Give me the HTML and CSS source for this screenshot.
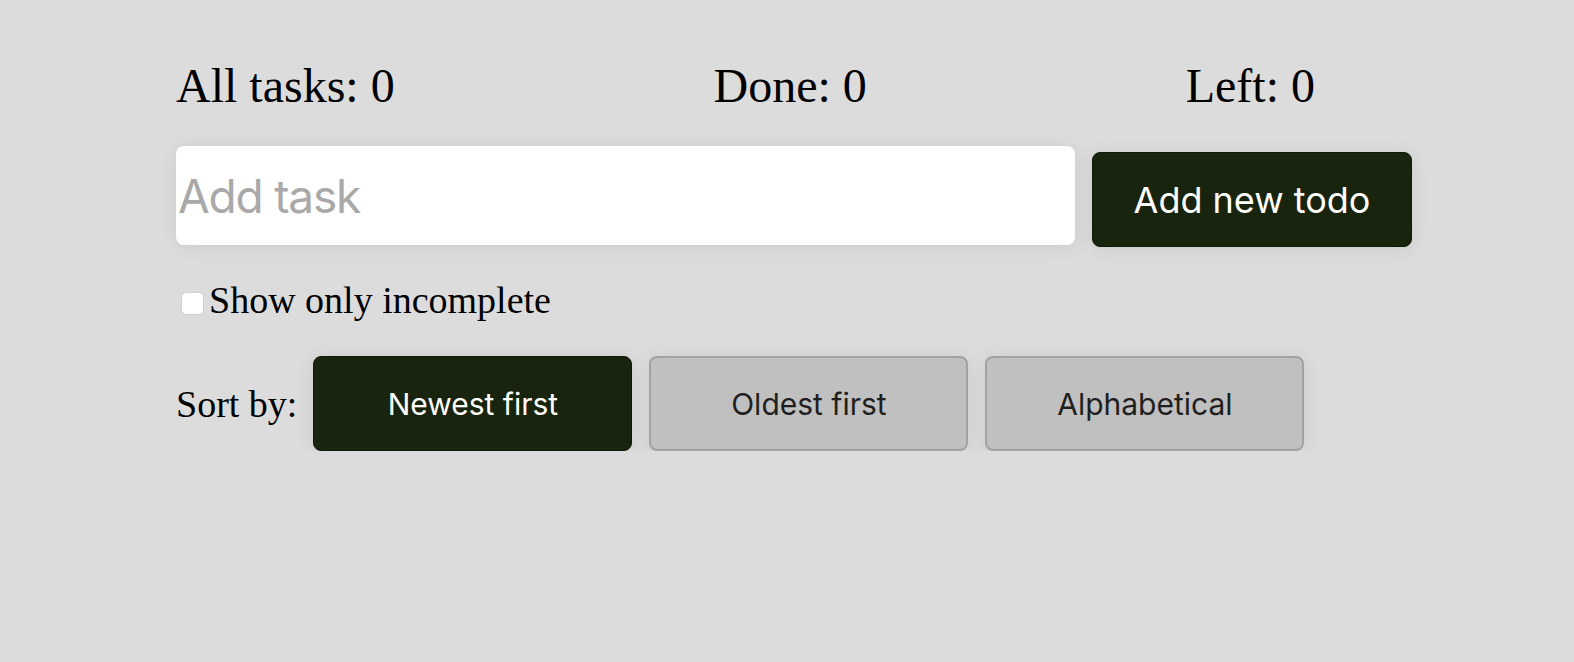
FILE: index.html
```html
<!DOCTYPE html>
<html lang="en">
<head>
<meta charset="utf-8">
<title>Todo</title>
<link rel="stylesheet" href="styles.css">
</head>
<body>
<div class="app">
  <div class="stats">
    <span>All tasks: 0</span>
    <span>Done: 0</span>
    <span>Left: 0</span>
  </div>
  <form class="add-form">
    <input class="task-input" type="text" placeholder="Add task">
    <button class="btn btn-dark btn-add" type="button">Add new todo</button>
  </form>
  <label class="filter">
    <input class="check" type="checkbox">
    <span>Show only incomplete</span>
  </label>
  <div class="sort">
    <span class="sort-label">Sort by:</span>
    <button class="btn btn-dark btn-sort" type="button">Newest first</button>
    <button class="btn btn-light btn-sort" type="button">Oldest first</button>
    <button class="btn btn-light btn-sort" type="button">Alphabetical</button>
  </div>
</div>
</body>
</html>
```

FILE: styles.css
```css
html, body {
  margin: 0;
  padding: 0;
  background: #dcdcdc;
}
body {
  font-family: "Liberation Serif", "Times New Roman", serif;
  color: #000;
}
.app {
  padding: 58px 0 0 176px;
}
.stats {
  display: flex;
  justify-content: space-between;
  width: 1139px;
  font-size: 48px;
  line-height: 55px;
}
.add-form {
  display: flex;
  align-items: flex-start;
  gap: 17px;
  margin: 33px 0 0 0;
}
.task-input {
  box-sizing: border-box;
  width: 899px;
  height: 99px;
  border: none;
  border-radius: 8px;
  background: #fff;
  padding: 0 0 0 2px;
  font-family: Inter, "Liberation Sans", sans-serif;
  font-size: 46px;
  letter-spacing: -1.2px;
  color: #222;
  outline: none;
  box-shadow: 0 2px 20px rgba(0, 0, 0, 0.07);
}
.task-input::placeholder {
  color: #a9a9a9;
}
.btn {
  box-sizing: border-box;
  width: 319px;
  height: 95px;
  border-radius: 8px;
  font-family: Inter, "Liberation Sans", sans-serif;
  cursor: pointer;
  box-shadow: 0 2px 20px rgba(0, 0, 0, 0.08);
}
.btn-dark {
  background: #18240d;
  border: 1px solid #111a09;
  color: #fff;
}
.btn-light {
  background: #c0c0c0;
  border: 2px solid #a2a2a2;
  color: #1f1f1f;
}
.btn-add {
  width: 320px;
  margin-top: 6px;
  font-size: 36px;
}
.btn-sort {
  font-size: 30px;
}
.filter {
  display: flex;
  align-items: center;
  margin-top: 31px;
  font-size: 38px;
  line-height: 44px;
}
.check {
  appearance: none;
  -webkit-appearance: none;
  box-sizing: border-box;
  width: 23px;
  height: 23px;
  margin: 6px 5px 0 5px;
  background: #fff;
  border: 1px solid #cfcfcf;
  border-radius: 5px;
}
.sort {
  display: flex;
  align-items: center;
  gap: 17px;
  margin-top: 34px;
  font-size: 38px;
  line-height: 44px;
}
.sort-label {
  margin-right: -1px;
}
```
